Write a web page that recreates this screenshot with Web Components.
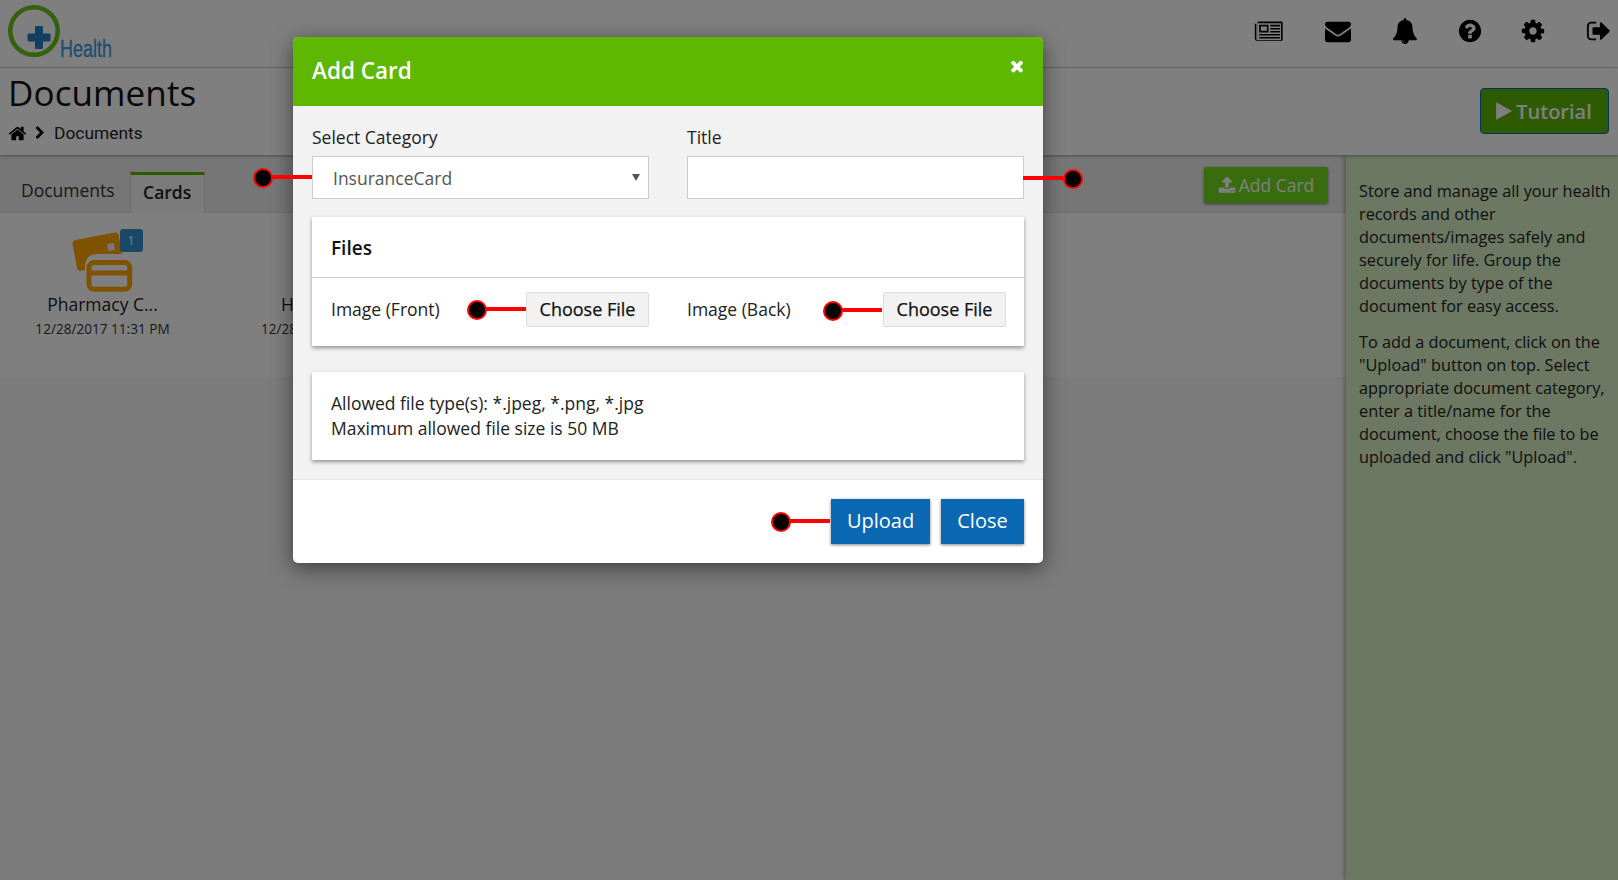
<!DOCTYPE html>
<html lang="en"><head><meta charset="utf-8"><title>Documents</title>
<style>
html,body{margin:0;height:100%;}
body{font-family:"Open Sans",sans-serif;color:#333;background:#f6f6f6;overflow:hidden;}
</style></head>
<body>
<app-shell></app-shell>

<script>
const ICONS={
home:"M1472 992v480q0 26-19 45t-45 19h-384v-384h-256v384h-384q-26 0-45-19t-19-45v-480q0-1 .5-3t.5-3l575-474 575 474q1 2 1 6zm223-69l-62 74q-8 9-21 11h-3q-13 0-21-7l-692-577-692 577q-12 8-24 7-13-2-21-11l-62-74q-8-10-7-23.500t11-21.500l719-599q32-26 76-26t76 26l244 204v-195q0-14 9-23t23-9h192q14 0 23 9t9 23v408l219 182q10 8 11 21.500t-7 23.500z",
chev:"M1363 877l-742 742q-19 19-45 19t-45-19l-166-166q-19-19-19-45t19-45l531-531-531-531q-19-19-19-45t19-45l166-166q19-19 45-19t45 19l742 742q19 19 19 45t-19 45z",
env:"M1792 710v794q0 66-47 113t-113 47h-1472q-66 0-113-47t-47-113v-794q44 49 101 87 362 246 497 345 57 42 92.500 65.500t94.500 48 110 24.500h2q51 0 110-24.500t94.500-48 92.500-65.500q170-123 498-345 57-39 100-87zm0-294q0 79-49 151t-122 123q-376 261-468 325-10 7-42.500 30.500t-54 38-52 32.500-57.500 27-50 9h-2q-23 0-50-9t-57.500-27-52-32.500-54-38-42.500-30.500q-91-64-262-182.500t-205-142.500q-62-42-117-115.500t-55-136.500q0-78 41.500-130t118.500-52h1472q65 0 112.500 47t47.500 113z",
bell:"M912 1696q0-16-16-16-59 0-101.500-42.500t-42.500-101.500q0-16-16-16t-16 16q0 73 51.500 124.500t124.500 51.500q16 0 16-16zm816-288q0 52-38 90t-90 38h-448q0 106-75 181t-181 75-181-75-75-181h-448q-52 0-90-38t-38-90q50-42 91-88t85-119.500 74.500-158.500 50-206 19.500-260q0-152 117-282.500t307-158.500q-8-19-8-39 0-40 28-68t68-28 68 28 28 68q0 20-8 39 190 28 307 158.500t117 282.500q0 139 19.500 260t50 206 74.500 158.500 85 119.500 91 88z",
help:"M1024 1376v-192q0-14-9-23t-23-9h-192q-14 0-23 9t-9 23v192q0 14 9 23t23 9h192q14 0 23-9t9-23zm256-672q0-88-55.500-163t-138.500-116-170-41q-243 0-371 213-15 24 8 42l132 100q7 6 19 6 16 0 25-12 53-68 86-92 34-24 86-24 48 0 85.500 26t37.500 59q0 38-20 61t-68 45q-63 28-115.500 86.500t-52.500 125.500v36q0 14 9 23t23 9h192q14 0 23-9t9-23q0-19 21.500-49.500t54.500-49.500q32-18 49-28.500t46-35 44.500-48 28-60.500 12.500-81zm384 192q0 209-103 385.500t-279.500 279.500-385.500 103-385.500-103-279.500-279.500-103-385.500 103-385.500 279.500-279.500 385.500-103 385.500 103 279.500 279.500 103 385.500z",
cog:"M1152 896q0-106-75-181t-181-75-181 75-75 181 75 181 181 75 181-75 75-181zm512-109v222q0 12-8 23t-20 13l-185 28q-19 54-39 91 35 50 107 138 10 12 10 25t-9 23q-27 37-99 108t-94 71q-12 0-26-9l-138-108q-44 23-91 38-16 136-29 186-7 28-36 28h-222q-14 0-24.500-8.500t-11.500-21.500l-28-184q-49-16-90-37l-141 107q-10 9-25 9-14 0-25-11-126-114-165-168-7-10-7-23 0-12 8-23 15-21 51-66.500t54-70.500q-27-50-41-99l-183-27q-13-2-21-12.500t-8-23.500v-222q0-12 8-23t19-13l186-28q14-46 39-92-40-57-107-138-10-12-10-24 0-10 9-23 26-36 98.500-107.500t94.500-71.500q13 0 26 10l138 107q44-23 91-38 16-136 29-186 7-28 36-28h222q14 0 24.500 8.500t11.500 21.500l28 184q49 16 90 37l142-107q9-9 24-9 13 0 25 10 129 119 165 170 7 8 7 22 0 12-8 23-15 21-51 66.500t-54 70.500q26 50 41 98l183 28q13 2 21 12.500t8 23.500z",
out:"M704 1440q0 4 1 20t.5 26.500-3 23.500-10 19.500-20.500 6.500h-320q-119 0-203.500-84.500t-84.500-203.500v-704q0-119 84.500-203.500t203.500-84.500h320q13 0 22.500 9.500t9.500 22.500q0 4 1 20t.5 26.500-3 23.500-10 19.500-20.500 6.500h-320q-66 0-113 47t-47 113v704q0 66 47 113t113 47h312l11.500 1 11.500 3 8 5.500 7 9 2 13.500zm928-544q0 26-19 45l-544 544q-19 19-45 19t-45-19-19-45v-288h-448q-26 0-45-19t-19-45v-384q0-26 19-45t45-19h448v-288q0-26 19-45t45-19 45 19l544 544q19 19 19 45z",
times:"M1490 1322q0 40-28 68l-136 136q-28 28-68 28t-68-28l-294-294-294 294q-28 28-68 28t-68-28l-136-136q-28-28-28-68t28-68l294-294-294-294q-28-28-28-68t28-68l136-136q28-28 68-28t68 28l294 294 294-294q28-28 68-28t68 28l136 136q28 28 28 68t-28 68l-294 294 294 294q28 28 28 68z",
upload:"M1344 1472q0-26-19-45t-45-19-45 19-19 45 19 45 45 19 45-19 19-45zm256 0q0-26-19-45t-45-19-45 19-19 45 19 45 45 19 45-19 19-45zm128-224v320q0 40-28 68t-68 28h-1472q-40 0-68-28t-28-68v-320q0-40 28-68t68-28h427q21 56 70.500 92t110.500 36h256q61 0 110.500-36t70.500-92h427q40 0 68 28t28 68zm-325-648q-17 40-59 40h-256v448q0 26-19 45t-45 19h-256q-26 0-45-19t-19-45v-448h-256q-42 0-59-40-17-39 14-69l448-448q18-19 45-19t45 19l448 448q31 30 14 69z",
play:"M1576 927l-1328 738q-23 13-39.500 3t-16.500-36v-1472q0-26 16.500-36t39.500 3l1328 738q23 13 23 31t-23 31z",
news:"M130 330h1532q50 0 50 50v1030q0 80-80 80H190q-140 0-140-140V460h90v950q0 40 40 40t40-40V380q0-50 50-50zm80 100v980q0 30-8 40h1400q10 0 10-10V430zM310 530h560v450H310zm100 100v250h360V630zM970 530h580v90H970zm0 180h580v90H970zm0 180h580v90H970zM310 1080h1240v90H310zm0 180h1240v90H310z"
};
function def(name,html,props){
  const t=document.createElement('template');t.innerHTML=html;
  customElements.define(name,class extends HTMLElement{
    constructor(){super();this.attachShadow({mode:'open'}).appendChild(t.content.cloneNode(true));}
    connectedCallback(){props&&props(this,this.shadowRoot);}
  });
}
def('fa-icon',`<style>:host{display:inline-flex;line-height:0}svg{width:var(--s,16px);height:var(--s,16px);fill:currentColor;display:block}</style><svg viewBox="0 0 1792 1792" aria-hidden="true"><path></path></svg>`,
 (h,r)=>{r.querySelector('path').setAttribute('d',ICONS[h.getAttribute('name')]);if(h.hasAttribute('size'))h.style.setProperty('--s',h.getAttribute('size')+'px');});

def('health-logo',`<style>:host{display:flex;align-items:flex-end;height:52px;margin:5px 0 0 8px;}
svg{display:block;width:52px;height:52px;flex:none}
span{display:block;width:52px;font:400 23px/1 "Liberation Sans",sans-serif;color:#3a9ee0;margin-left:0;margin-bottom:-4px;transform:scaleX(.78);transform-origin:0 50%;white-space:nowrap;-webkit-text-stroke:.3px #3a9ee0}</style>
<svg viewBox="0 0 52 52"><circle cx="26" cy="26" r="23.700" fill="none" stroke="#6cc51e" stroke-width="4.600"/><path d="M20.500 28.500h6.500V22q0-1 1-1h6q1 0 1 1v6.500h6.500q1 0 1 1v6q0 1-1 1H35V43q0 1-1 1h-6q-1 0-1-1v-6.500h-6.500q-1 0-1-1v-6q0-1 1-1z" fill="#2680c4"/></svg><span>Health</span>`);

def('top-bar',`<style>:host{display:flex;height:67px;border-bottom:1px solid #d8d8d8;background:#fff;color:#000}
.r{margin-left:auto;display:flex;align-items:center;padding:0 6px 6px 0;}
</style><health-logo></health-logo><div class="r">
<fa-icon name="news" size="30"></fa-icon>
<fa-icon name="env" size="26" style="margin-left:41px"></fa-icon>
<fa-icon name="bell" size="26" style="margin-left:40.500px"></fa-icon>
<fa-icon name="help" size="26" style="margin-left:39px"></fa-icon>
<fa-icon name="cog" size="26" style="margin-left:37.500px"></fa-icon>
<fa-icon name="out" size="26" style="margin-left:40px"></fa-icon></div>`);

def('page-title',`<style>:host{display:flex;height:87px;background:#fff;box-shadow:0 1px 3px rgba(0,0,0,.35);position:relative;z-index:1}
.l{padding:2px 0 0 8px;color:#111}
h1{font:400 35px/46px "Open Sans",sans-serif;margin:0;letter-spacing:.1px}
.b{display:flex;align-items:center;font:400 17.400px/20px Roboto,sans-serif;margin-top:7px;color:#222}
.b fa-icon{color:#000}.b fa-icon+fa-icon{margin:0 7px 0 6px}
.t{margin:20px 9px 0 auto;height:46px;width:129px;box-sizing:border-box;display:flex;align-items:center;justify-content:center;gap:2px;padding-right:3px;background:#5bb500;border:1px solid #0b68b3;border-radius:4px;color:#fff;font:600 20px "Open Sans",sans-serif}
</style><div class="l"><h1>Documents</h1><div class="b"><fa-icon name="home" size="19"></fa-icon><fa-icon name="chev" size="14"></fa-icon><span>Documents</span></div></div>
<div class="t"><fa-icon name="play" size="20"></fa-icon>Tutorial</div>`);

def('doc-card',`<style>:host{display:flex;flex-direction:column;align-items:center;width:226px;margin-left:-10.500px;padding-top:17px;box-sizing:border-box;color:#222;flex:none}
.i{position:relative;width:70px;height:62px;left:3px}
svg{display:block;width:70px;height:62px}
.bd{position:absolute;left:49px;top:-1px;width:23px;height:23px;border-radius:3px;color:#fff;font:400 13px/23px "Open Sans",sans-serif;text-align:center;background:#3593d0}
.n{font:400 17.500px/24px "Open Sans",sans-serif;white-space:nowrap}
.d{font:400 13.600px/24px "Open Sans",sans-serif;color:#333;white-space:nowrap;margin-top:1px}
</style><div class="i"><svg viewBox="0 0 70 62"><path d="M4.500 10L44 2.500q3-.5 3.500 2L51 24H27q-13 0-13 13v3l-5 1q-2 0-3-3L1.500 14q-.5-3 3-4z" fill="#ffa500"/><rect x="36.500" y="13.500" width="7" height="7" transform="rotate(-12 40 17)" fill="#eee"/><rect x="18" y="32.500" width="40.700" height="26.700" rx="5" fill="none" stroke="#ffa500" stroke-width="5"/><rect x="18" y="40.500" width="40.700" height="5" fill="#ffa500"/></svg><span class="bd">1</span></div>
<div class="n"><slot name="n"></slot></div><div class="d"><slot name="d"></slot></div>`);

def('doc-peek',`<style>:host{display:flex;flex-direction:column;flex:none;width:40px;margin-left:45.500px;padding-top:79px;box-sizing:border-box;color:#222;white-space:nowrap}
.n{font:400 17.500px/24px "Open Sans",sans-serif;padding-left:20px}
.d{font:400 13.600px/24px "Open Sans",sans-serif;color:#333;margin-top:1px}
</style><div class="n"><slot name="n"></slot></div><div class="d"><slot name="d"></slot></div>`);

def('doc-area',`<style>:host{display:block;flex:1;min-width:0;background:#f6f6f6}
.tabs{display:flex;height:58px;box-sizing:border-box;border-bottom:1px solid #dcdcdc;background:#ececec;align-items:flex-end;padding-left:6px;position:relative}
.tab{font:400 17.500px/24px "Open Sans",sans-serif;color:#333;padding:0 15px 10px;}
.tab.a{box-sizing:border-box;height:41px;width:75px;padding:5px 0 0;margin:0 0 -1px 0;text-align:center;font-weight:600;background:#f6f6f6;border:1px solid #dcdcdc;border-top:3px solid #5bb500;border-bottom:none;color:#222}
.add{position:absolute;right:18px;top:12px;width:124px;height:36px;border-radius:2px;color:#fff;display:flex;align-items:center;justify-content:center;gap:3px;font:400 17.500px "Open Sans",sans-serif;box-shadow:0 1px 3px rgba(0,0,0,.5);background:#70d81c}
.cards{display:flex;height:164px;background:#fff}
</style><div class="tabs"><div class="tab">Documents</div><div class="tab a">Cards</div><div class="add"><fa-icon name="upload" size="18"></fa-icon>Add Card</div></div>
<div class="cards"><slot></slot></div>`);

def('side-help',`<style>:host{display:block;box-sizing:border-box;width:272px;padding:25px 6px 0 13px;background:#d8f0c4;font:400 16.300px/23px "Open Sans",sans-serif;color:#222;box-shadow:-2px 0 4px rgba(0,0,0,.25);position:relative}
::slotted(p){margin:0 0 13px}</style><slot></slot>`);

def('pin-mark',`<style>:host{position:absolute;display:flex;align-items:center;height:20px;z-index:4}
i{display:block;box-sizing:border-box;width:20px;height:20px;border-radius:50%;background:#000;border:2px solid #f00;flex:none}
b{display:block;height:4px;background:#f00;margin-left:-1px;flex:none;transform:translateY(-1px)}
</style><i></i><b></b>`,(h,r)=>{r.querySelector('b').style.width=h.getAttribute('len')+'px';});

def('file-choice',`<style>:host{display:flex;align-items:center;justify-content:space-between;font:400 17.500px "Open Sans",sans-serif;color:#222}
span{padding-bottom:2px}
button{all:unset;box-sizing:border-box;width:var(--w,123px);height:35px;text-align:center;background:#f2f2f2;border:1px solid #ddd;border-radius:2px;font:500 18px/33px "Open Sans",sans-serif;color:#111;-webkit-text-stroke:.25px #111}
</style><span><slot></slot></span><button>Choose File</button>`);

def('card-panel',`<style>:host{display:block;background:#fff;box-shadow:0 2px 4px rgba(0,0,0,.4);color:#222}</style><slot></slot>`);

def('add-dialog',`<style>
:host{display:flex;flex-direction:column;position:absolute;z-index:3;left:293px;top:37px;width:750px;height:526px;border-radius:5px;overflow:hidden;background:#fff;box-shadow:0 5px 20px rgba(0,0,0,.5);font-family:"Open Sans",sans-serif}
header{flex:none;height:69px;background:#5eb700;color:#fff;display:flex;align-items:center;justify-content:space-between;padding:0 18px 0 19px}
h2{margin:0;font:600 22.500px/1 "Open Sans",sans-serif;}
.x{transform:translateY(-6px);color:#fff;margin-right:-1px}
.body{flex:none;height:373px;background:#f2f2f2;padding:19px 19px 0;box-sizing:border-box;display:flex;flex-direction:column}
.cols{display:grid;grid-template-columns:337px 337px;column-gap:38px;}
label{display:block;font:400 17.500px/24px "Open Sans",sans-serif;color:#222;margin-bottom:7px}
.ctrl{height:43px;box-sizing:border-box;border:1px solid #ccc;background:#fff;position:relative;font:400 17.500px/43px "Open Sans",sans-serif;color:#555;padding-left:20px}
.ar{position:absolute;right:8px;top:17px;width:0;height:0;border:4px solid transparent;border-top:7px solid #555;border-bottom:0}
.p1{margin-top:18px;height:129px;display:flex;flex-direction:column}
.h{height:61px;box-sizing:border-box;border-bottom:1px solid #ccc;padding:1px 19px 0;display:flex;align-items:center;font:600 19px "Open Sans",sans-serif;color:#111}
.row{display:grid;grid-template-columns:318px 319px;column-gap:38px;padding:14px 19px 0}
.p2{margin-top:26px;height:88px;padding:19px 19px 0;box-sizing:border-box;font:400 17.500px/25px "Open Sans",sans-serif}
footer{flex:1;border-top:1px solid #e5e5e5;box-sizing:border-box;display:flex;justify-content:flex-end;gap:11px;padding:19px 19px 0}
.btn{all:unset;box-sizing:border-box;height:45px;padding-bottom:2px;background:#0b68b3;color:#fff;text-align:center;font:400 20px/43px "Open Sans",sans-serif;box-shadow:0 1px 3px rgba(0,0,0,.5)}
</style>
<header><h2>Add Card</h2><fa-icon class="x" name="times" size="18"></fa-icon></header>
<div class="body">
 <div class="cols"><div><label>Select Category</label><div class="ctrl">InsuranceCard<span class="ar"></span></div></div><div><label>Title</label><div class="ctrl"></div></div></div>
 <card-panel class="p1"><div class="h">Files</div><div class="row"><file-choice>Image (Front)</file-choice><file-choice>Image (Back)</file-choice></div></card-panel>
 <card-panel class="p2">Allowed file type(s): *.jpeg, *.png, *.jpg<br>Maximum allowed file size is 50 MB</card-panel>
</div>
<footer><button class="btn" style="width:99px">Upload</button><button class="btn" style="width:83px">Close</button></footer>`);

def('app-shell',`<style>:host{display:flex;flex-direction:column;height:880px;position:relative;overflow:hidden}
.main{flex:1;display:flex;min-height:0}
.veil{position:absolute;inset:0;background:rgba(0,0,0,.5);z-index:2}
</style>
<top-bar></top-bar><page-title></page-title>
<div class="main"><doc-area>
 <doc-card><span slot="n">Pharmacy C...</span><span slot="d">12/28/2017 11:31 PM</span></doc-card>
 <doc-peek><span slot="n">H</span><span slot="d">12/28</span></doc-peek>
</doc-area><side-help><p>Store and manage all your health records and other documents/images safely and securely for life. Group the documents by type of the document for easy access.</p><p>To add a document, click on the "Upload" button on top. Select appropriate document category, enter a title/name for the document, choose the file to be uploaded and click "Upload".</p></side-help></div>
<div class="veil"></div>
<add-dialog></add-dialog>
<pin-mark len="40" style="left:253px;top:168px"></pin-mark>
<pin-mark len="40" style="left:467px;top:300px"></pin-mark>
<pin-mark len="40" style="left:823px;top:301px"></pin-mark>
<pin-mark len="40" style="left:771px;top:512px"></pin-mark>
<pin-mark len="40" style="left:1024px;top:169px;flex-direction:row-reverse"></pin-mark>`);
</script>
</body></html>
